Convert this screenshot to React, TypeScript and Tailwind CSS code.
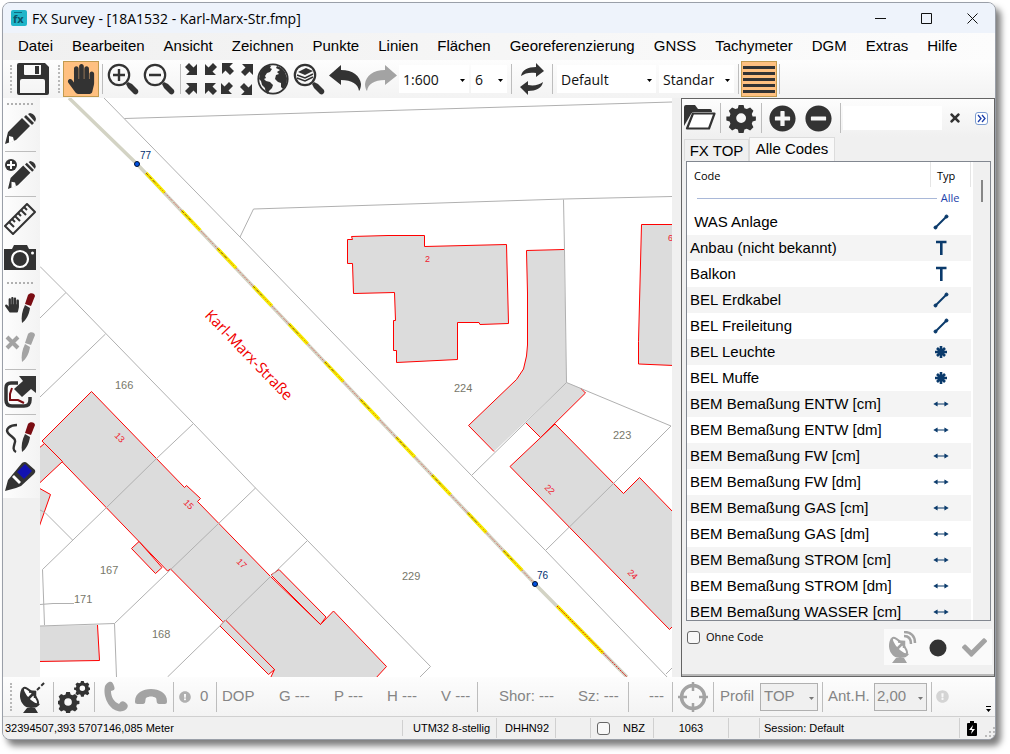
import React from "react";
import { FaCheck, FaExclamationCircle, FaHandPaper, FaMinusCircle, FaPlusCircle, FaTimes } from "react-icons/fa";

const menus = ["Datei", "Bearbeiten", "Ansicht", "Zeichnen", "Punkte", "Linien", "Flächen", "Georeferenzierung", "GNSS", "Tachymeter", "DGM", "Extras", "Hilfe"];

const codes = [
  { name: " WAS Anlage", type: "line" },
  { name: "Anbau (nicht bekannt)", type: "text" },
  { name: "Balkon", type: "text" },
  { name: "BEL Erdkabel", type: "line" },
  { name: "BEL Freileitung", type: "line" },
  { name: "BEL Leuchte", type: "point" },
  { name: "BEL Muffe", type: "point" },
  { name: "BEM Bemaßung ENTW [cm]", type: "dim" },
  { name: "BEM Bemaßung ENTW [dm]", type: "dim" },
  { name: "BEM Bemaßung FW [cm]", type: "dim" },
  { name: "BEM Bemaßung FW [dm]", type: "dim" },
  { name: "BEM Bemaßung GAS [cm]", type: "dim" },
  { name: "BEM Bemaßung GAS [dm]", type: "dim" },
  { name: "BEM Bemaßung STROM [cm]", type: "dim" },
  { name: "BEM Bemaßung STROM [dm]", type: "dim" },
  { name: "BEM Bemaßung WASSER [cm]", type: "dim" },
];

type IconProps = { children: React.ReactNode; className?: string };

// all toolbar icons are drawn on a 32 x 32 grid
const Icon = ({ children, className = "text-[#333]" }: IconProps) => (
  <svg width="32" height="32" viewBox="0 0 32 32" fill="currentColor" className={`shrink-0 ${className}`} aria-hidden="true">
    {children}
  </svg>
);

const ToolButton = ({ label, children, active = false }: { label: string; children: React.ReactNode; active?: boolean }) => (
  <button
    aria-label={label}
    className={`flex h-9 w-9 shrink-0 items-center justify-center ${active ? "border border-[#c29b4f] bg-[#ffc080]" : ""}`}
  >
    {children}
  </button>
);

const Sep = ({ className = "mx-1" }: { className?: string }) => (
  <span className={`h-[30px] w-px shrink-0 bg-[#bdbdbd] ${className}`} />
);

const Grip = () => (
  <span className="mx-[3px] h-7 w-0 shrink-0 border-l-2 border-dotted border-[#b8b8b8]" />
);

const SideSep = () => (
  <span className="flex h-[3px] items-center">
    <span className="h-px w-[31px] bg-[#bdbdbd]" />
  </span>
);

const SideGrip = () => (
  <span className="flex h-2 items-center">
    <span className="w-[26px] border-t-2 border-dotted border-[#b0b0b0]" />
  </span>
);

type PickerProps = { label: string; value: string; className: string; selectClass?: string; arrow?: string };

const Picker = ({ label, value, className, selectClass = "h-7 bg-white pl-1 font-['Open_Sans',sans-serif] text-[14px] text-[#111]", arrow = "text-black" }: PickerProps) => (
  <div className={`relative shrink-0 ${className}`}>
    <select aria-label={label} className={`block w-full appearance-none rounded-none ${selectClass}`}>
      <option>{value}</option>
    </select>
    <svg width="5" height="3" viewBox="0 0 5 3" fill="currentColor" className={`pointer-events-none absolute top-1/2 right-1 ${arrow}`}>
      <path d="M0 0h5L2.5 3z" />
    </svg>
  </div>
);

const SaveIcon = () => (
  <Icon>
    <path fillRule="evenodd" d="M2 0h26l4 4v26a2 2 0 0 1-2 2H2a2 2 0 0 1-2-2V2a2 2 0 0 1 2-2zM7 2v9a1 1 0 0 0 1 1h15a1 1 0 0 0 1-1V2zM5 16a2 2 0 0 0-2 2v12h25V18a2 2 0 0 0-2-2zM18 3h4v8h-4z" />
  </Icon>
);

const Lens = ({ children }: { children: React.ReactNode }) => (
  <Icon>
    <circle cx="12" cy="12" r="10.2" fill="none" stroke="currentColor" strokeWidth="2.2" />
    <path d="M19 21l2-2 4 2 6 6q1 2-.5 3.500T27 31l-6-6z" />
    {children}
  </Icon>
);

const arrowHead = "M3 0l4.500 4.500L11 1v11H0l3.500-3.500L-1 4z";

const FitInIcon = () => (
  <Icon>
    {[0, 90, 180, 270].map((a) => (
      <path key={a} d={arrowHead} transform={`rotate(${a} 16 16) translate(1 0)`} />
    ))}
  </Icon>
);

const FitOutIcon = () => (
  <Icon>
    {[0, 90, 180, 270].map((a) => (
      <path key={a} d={arrowHead} transform={`rotate(${a} 16 16) translate(12 12) rotate(180)`} />
    ))}
  </Icon>
);

const GlobeIcon = () => (
  <Icon>
    <circle cx="16" cy="16" r="14.700" fill="none" stroke="currentColor" strokeWidth="1.800" />
    <path d="M3 10c2-4 5-7 9-8l2 1-1 2 2 1-2 3-3 1-2 3 1 2-2 1 2 2 4 1 3 3-1 3-3 3-1 3c-2-1-3-4-3-6l-3-3-1-4-2-2zM20 3c4 1 6 3 8 6l2 6c0 5-1 8-4 11l-2-2v-4l-3-1-3-3 1-4 3-1-2-2 3-2-4-2z" />
  </Icon>
);

const TurnIcon = ({ flip = false, className }: { flip?: boolean; className?: string }) => (
  <Icon className={className}>
    <path transform={flip ? "translate(32 0) scale(-1 1)" : undefined} d="M0 12.500L12 2v5c12 0 19 6 20 14 0 3-1 6-2 7-1-7-7-11-18-11v5z" />
  </Icon>
);

const RefreshIcon = () => (
  <Icon>
    <path d="M5 13c1-6 7-9 15-9V0l8 8-8 6v-4c-6-1-11 0-15 3zM27 19c-1 6-7 9-15 9v4L4 24l8-6v4c6 1 11 0 15-3z" />
  </Icon>
);

const pencilShape = (
  <g>
    <path d="M1 31l3-12L18 5l8 8-14 14zM20 4l2-2 8 8-2 2zM24 1l2-1q5 1 6 6l-1 3z" />
    <path d="M5 23l4 1 1 4-5 2z" fill="#fff" />
  </g>
);

const pen = (top = "#7a0c12") => (
  <g>
    <path d="M21 13l5 3c-1 7-4 12-8 15-1-6 0-12 3-18z" />
    <path d="M24 3c2-3 7-2 7 1l-4 10-6-2z" fill={top} />
  </g>
);

const gearPath = "M13 0h6l1 4 3 1 4-2 4 4-2 4 1 3 4 0v5l-4 1-1 3 2 4-4 4-4-2-3 1-1 4h-6l-1-4-3-1-4 2-4-4 2-4-1-3-4-1v-5l4 0 1-3-2-4 4-4 4 2 3-1zM16 10a6 6 0 1 0 0 12 6 6 0 0 0 0-12z";

const DishIcon = ({ waves = false, className }: { waves?: boolean; className?: string }) => (
  <Icon className={className}>
    <path d="M5 7C0 16 5 27 14 27c4 0 7-1 9-4l-6-2-8-8zM10 27h8l3 5H6z" />
    <ellipse cx="13.500" cy="15" rx="10.500" ry="3.500" transform="rotate(48 13.500 15)" fill="#fff" stroke="currentColor" strokeWidth="2" />
    <path d="M11 18l7-7M12 10.500l6 .5v6" fill="none" stroke="currentColor" strokeWidth="2.500" />
    {waves ? (
      <path d="M18 5c5 0 7 3 7 8M18 1c7 0 11 4 11 11" fill="none" stroke="currentColor" strokeWidth="2.500" />
    ) : (
      <path d="M20 9L28 1" stroke="currentColor" strokeWidth="2" strokeDasharray="4 2" />
    )}
  </Icon>
);

const TypeIcon = ({ type }: { type: string }) => (
  <svg width="16" height="16" viewBox="0 0 16 16" fill="#0a3a6b" stroke="#0a3a6b" className="mx-auto block" role="img" aria-label={type}>
    {type === "line" && (
      <>
        <path d="M2.500 13.500l11-11" strokeWidth="2" />
        <circle cx="2.500" cy="13.500" r="1.500" />
        <circle cx="13.500" cy="2.500" r="1.500" />
      </>
    )}
    {type === "text" && <path d="M3 2h10.500M8.300 2v13" strokeWidth="2.600" fill="none" />}
    {type === "point" && <path d="M8 2v12M2 8h12M4 4l8 8M12 4l-8 8" strokeWidth="2.600" />}
    {type === "dim" && <path d="M3 8h10M4 6.500L1.500 8 4 9.500zM12 6.500L14.500 8 12 9.500z" strokeWidth="1.200" />}
  </svg>
);

const TopToolbar = () => (
  <div className="flex h-[38px] shrink-0 items-center overflow-hidden bg-gradient-to-b from-[#fdfdfd] to-[#f3f3f3] pl-1">
    <Grip />
    <ToolButton label="Speichern"><SaveIcon /></ToolButton>
    <span className="w-1" />
    <Grip />
    <ToolButton label="Verschieben" active>
      <FaHandPaper size={30} color="#333" />
    </ToolButton>
    <Sep className="ml-[3px] mr-[2px]" />
    <ToolButton label="Vergrößern">
      <Lens><path d="M12 6v12M6 12h12" stroke="currentColor" strokeWidth="2.400" /></Lens>
    </ToolButton>
    <ToolButton label="Verkleinern">
      <Lens><path d="M6 12h12" stroke="currentColor" strokeWidth="2.400" /></Lens>
    </ToolButton>
    <Sep className="ml-[3px] mr-[2px]" />
    <ToolButton label="Einpassen"><FitInIcon /></ToolButton>
    <ToolButton label="Ausdehnen"><FitOutIcon /></ToolButton>
    <ToolButton label="Karte"><GlobeIcon /></ToolButton>
    <ToolButton label="Ebenen">
      <Lens>
        <path d="M5 9l8-4 7 3-8 4z" />
        <path d="M4 12l8 3 8-4M4 15l8 3 8-4" fill="none" stroke="currentColor" strokeWidth="1.600" />
      </Lens>
    </ToolButton>
    <ToolButton label="Zurück"><TurnIcon /></ToolButton>
    <ToolButton label="Vor"><TurnIcon flip className="text-[#a3a3a3]" /></ToolButton>
    <Picker label="Maßstab" value="1:600" className="w-[70px]" />
    <Picker label="Größe" value="6" className="ml-[2px] w-9" />
    <Sep className="ml-1 mr-[2px]" />
    <ToolButton label="Aktualisieren"><RefreshIcon /></ToolButton>
    <Sep className="ml-[2px] mr-1" />
    <Picker label="Ansicht" value="Default" className="w-[99px]" />
    <Picker label="Stil" value="Standar" className="ml-[3px] w-[75px]" />
    <Sep className="ml-1 mr-[2px]" />
    <ToolButton label="Linienliste" active>
      <Icon>
        <path d="M0 3h32v3H0zM0 9h32v3H0zM0 15h32v3H0zM0 21h32v3H0zM0 27h32v3H0z" />
      </Icon>
    </ToolButton>
    <Sep className="ml-[2px]" />
  </div>
);

const SideToolbar = () => (
  <aside className="w-[37px] shrink-0 bg-[#f0f0f0]">
    <div className="flex flex-col items-center gap-[3px] bg-gradient-to-r from-[#fdfdfd] to-[#f3f3f3] pt-[2px] pr-[3px] pb-1">
      <SideGrip />
      <ToolButton label="Zeichnen"><Icon>{pencilShape}</Icon></ToolButton>
      <SideSep />
      <ToolButton label="Punkt zeichnen">
        <Icon>
          <g transform="translate(3 3) scale(.9)">{pencilShape}</g>
          <circle cx="7" cy="7" r="7.500" fill="#f8f8f8" />
          <circle cx="7" cy="7" r="6" />
          <path d="M7 3v8M3 7h8" stroke="#fff" strokeWidth="2" />
        </Icon>
      </ToolButton>
      <SideSep />
      <ToolButton label="Messen">
        <Icon>
          <path d="M1 23L23 1l8 8L9 31z" fill="none" stroke="currentColor" strokeWidth="2" strokeLinejoin="round" />
          <path d="M5 19l5 5M8 16l3 3M11 13l5 5M14 10l3 3M17 7l5 5M20 4l3 3" stroke="currentColor" strokeWidth="2" />
        </Icon>
      </ToolButton>
      <ToolButton label="Foto">
        <Icon>
          <path d="M0 7h8l2-4h13l2 4h7v21H0z" />
          <circle cx="16" cy="17" r="8" fill="none" stroke="#fff" strokeWidth="2.200" />
          <circle cx="28.500" cy="11" r="1.500" fill="#fff" />
        </Icon>
      </ToolButton>
      <SideGrip />
      <ToolButton label="Objekt verschieben">
        <Icon>
          <g transform="translate(1 5) scale(.031)">
            <path d="M408.800 80c-22 0-40 18-40 40v112h-10V60c0-22-15-40-37-40s-37 18-37 40v172h-10V40c0-22-15-40-37-40s-37 18-37 40v192h-10V80c0-22-15-40-37-40s-37 18-37 40v236l-41-56c-13-18-38-22-56-9s-22 38-9 56l128 176c8 11 20 17 33 17h208c19 0 35-13 39-31l29-130c2-8 2-15 2-23V120c0-22-18-40-41-40z" />
          </g>
          {pen()}
        </Icon>
      </ToolButton>
      <ToolButton label="Objekt löschen">
        <Icon className="text-[#a3a3a3]">
          <path d="M3 6l11 11M14 6L3 17" stroke="currentColor" strokeWidth="4" />
          {pen("#a3a3a3")}
        </Icon>
      </ToolButton>
      <SideSep />
      <ToolButton label="Export">
        <Icon>
          <path d="M14 7H7q-5 0-5 5v12q0 6 6 6h12q6 0 6-6v-3" fill="none" stroke="currentColor" strokeWidth="3.500" />
          <path d="M15 0h17v17l-5-4-9 8-8-8 9-8z" />
          <path d="M8 12l-2 6v6l8 0 6 3" fill="none" stroke="#7a0c12" strokeWidth="2" />
        </Icon>
      </ToolButton>
      <SideSep />
      <ToolButton label="Freihand">
        <Icon>
          <path d="M13 4C6 4 1 8 4 12s8 5 7 9-3 8 1 10" fill="none" stroke="currentColor" strokeWidth="2.400" />
          {pen()}
        </Icon>
      </ToolButton>
      <ToolButton label="Marker">
        <Icon>
          <path d="M1 31l3-11 14-17q3-2 5 0l8 7q1 2-1 4L17 26l-5 2z" />
          <path d="M21 4l7 7-8 8-7-7z" fill="#1212b0" />
          <path d="M10 15l7 7-2 2-7-7z" fill="#fff" />
        </Icon>
      </ToolButton>
    </div>
  </aside>
);

const ROAD = "M69 98L137 164L535 584L627 677";

const MapView = () => (
  <main className="min-w-0 flex-1 bg-white">
    <svg className="block h-full w-full" viewBox="40 98 632 579" preserveAspectRatio="xMinYMin slice" fontFamily="Liberation Sans, sans-serif">
      {/* buildings */}
      <g fill="#dcdcdc" stroke="#f00" strokeWidth="1">
        <path d="M351.500 236.500L388 235.500H424.500V246.500L506.500 244.500L508.500 323.500L480 324.500L479 322.500H457.500V359.500L396.500 362.500V350.500H393.500V320.500H395.500L394.500 292.500L353.500 293.500L352.500 263.500H347.500V239.500H352.500z" />
        <path stroke="none" d="M526.500 250.500L564 249.500L566.500 382.500L494 451.500L468.500 425.500L516.500 379.500L523.500 369L526.500 356L527.500 345V293z" />
        <path fill="none" d="M494 451.500L468.500 425.500L516.500 379.500L523.500 369L526.500 356L527.500 345V293L526.500 250.500L564 249.500" />
        <path stroke="none" d="M566.500 382.500L580.500 388L585.500 393L540.500 437.500L526 423z" />
        <path fill="none" d="M580.500 388L585.500 393L540.500 437.500L526 423" />
        <path d="M555 424L623.500 493.500L639.500 477.500L674 513V625L669.500 629.500L510 466.500z" />
        <path d="M674 224.500H641.500L638.500 341.500V364L674 365.500z" />
        <path d="M91.500 391.500L184.500 487.500L186.500 485.500L200.500 498.500L197.500 501.500L270 576L320.500 624.500L333.500 611L386.500 666.500L375 679H270L274.500 669.500L222.500 621.500L170.500 569L167.500 571L42 441z" />
        <path d="M271 575L279 569.500L326 617L320.500 624.500z" />
        <path d="M139 541.500L131.500 548.500L155.500 573.500L162 567.500z" />
        <path d="M225.500 620L220 626L268.500 674.500L274.500 669.500z" />
        <path d="M38 449L44.500 443.500L62.500 461.500L38 484.500z" />
        <path d="M38 487.500L50.500 494.500L38 530z" />
        <path stroke="none" d="M38 626L97.500 625L99.500 660.500L38 662z" />
        <path fill="none" d="M97.500 625L99.500 660.500L38 661.500" />
      </g>

      {/* parcel borders */}
      <path
        fill="none"
        stroke="#b0b0b0"
        d="M104 98L240 237L330 330L471.500 475.500L545.500 550.500L668 678M124.500 118.500L672 102M240 237L253.500 209L564 199L672 196.500M563.500 199.500L564.500 250L566.500 382.500L671 426M566.500 382.500L471.500 475.500M671 426L613.500 483.500L545.500 550.500M672 668L666 674M40 266.500L66 292.500L151 380L193.500 423.500L255.500 488L307.500 540.500L430.500 666.500L420 677M66 292.500L40 318M105.500 334L40 397M193.500 423.500L156.500 458.500L106.500 507.500L42.500 569.500L44.500 625M72.500 540L45 512.500L40 510M255.500 488L114.500 623.500L116.500 677M114.500 623.500L40 626M307.500 540.500L167.500 677M40 604.500L53 603.500H74"
      />

      {/* surveyed line */}
      <g fill="none">
        <path d={ROAD} stroke="#d3d3c4" strokeWidth="3.500" />
        <path d="M146 173L535 584" stroke="#f6f000" strokeWidth="3.500" strokeDasharray="27 25" />
        <path d="M146 173L535 584" stroke="#6b6b20" strokeWidth="1" strokeDasharray="3 2 3 2 3 39" />
        <path d="M146 173L535 584" stroke="#e01010" strokeWidth="1" strokeDasharray="2 1 2 1 2 2" strokeOpacity=".5" />
        <path d="M557 606L603 653" stroke="#f6f000" strokeWidth="3.500" />
        <path d="M557 606L627 677" stroke="#e01010" strokeWidth="1" strokeDasharray="2 1" />
      </g>
      <g fill="#0050e0" stroke="#001030">
        <circle cx="137" cy="164" r="2.500" />
        <circle cx="535" cy="584" r="2.500" />
      </g>

      <g fill="#003070" fontSize="10">
        <text x="140" y="159">77</text>
        <text x="537" y="579">76</text>
      </g>
      <text transform="translate(204 316) rotate(46)" fill="#f00000" fontSize="15" fontFamily="Open Sans, sans-serif">Karl-Marx-Straße</text>
      <g fill="#77776a" fontSize="11">
        <text x="115" y="389">166</text>
        <text x="454" y="392">224</text>
        <text x="613" y="439">223</text>
        <text x="402" y="580">229</text>
        <text x="100" y="574">167</text>
        <text x="74" y="603">171</text>
        <text x="152" y="638">168</text>
      </g>
      <g fill="#f02030" fontSize="9">
        <text x="425" y="262">2</text>
        <text x="668" y="241">6</text>
        <text transform="translate(114 436) rotate(46)">13</text>
        <text transform="translate(183 503) rotate(46)">15</text>
        <text transform="translate(236 562) rotate(46)">17</text>
        <text transform="translate(544 488) rotate(46)">22</text>
        <text transform="translate(627 573) rotate(46)">24</text>
      </g>
    </svg>
  </main>
);

const CodePanel = () => (
  <section className="ml-[9px] flex w-[314px] shrink-0 flex-col border border-[#646464] bg-[#f0f0f0]">
    <div className="flex h-[38px] shrink-0 items-center bg-gradient-to-b from-[#fdfdfd] to-[#f0f0f0]">
      <ToolButton label="Öffnen">
        <Icon>
          <path d="M0 24V5q0-2 2-2h9l3 4h12q2 0 2 3H10q-2 0-3 2z" />
          <path d="M9 11.500h21.500L25 26.500H3z" fill="#fff" stroke="currentColor" strokeWidth="2.200" strokeLinejoin="round" />
        </Icon>
      </ToolButton>
      <Sep className="mx-[2px]" />
      <ToolButton label="Einstellungen">
        <Icon><path transform="translate(3 3) scale(.82)" fillRule="evenodd" d={gearPath} /></Icon>
      </ToolButton>
      <Sep className="mx-[2px]" />
      <ToolButton label="Hinzufügen"><FaPlusCircle size={27} color="#333" /></ToolButton>
      <ToolButton label="Entfernen"><FaMinusCircle size={27} color="#333" /></ToolButton>
      <Sep className="ml-1 mr-[2px]" />
      <input aria-label="Code suchen" className="h-6 w-0 flex-1 bg-white px-1 text-[14px]" />
      <button aria-label="Suche leeren" className="ml-[5px] p-px"><FaTimes size={14} color="#333" /></button>
      <button aria-label="Mehr" className="mr-[6px] ml-3 flex h-[13px] w-[13px] items-center justify-center rounded-[3px] border border-[#7c9cd0] bg-white">
        <svg width="9" height="9" viewBox="0 0 9 9" fill="none" stroke="#1c3faa" strokeWidth="1.300"><path d="M1 1l3 3.500L1 8M5 1l3 3.500L5 8" /></svg>
      </button>
    </div>

    <div className="flex shrink-0 items-end pl-[2px] text-[15px]">
      <button className="h-[22px] w-[65px] border border-b-0 border-[#dcdcdc]">FX TOP</button>
      <button className="h-6 w-[86px] border border-b-0 border-[#dcdcdc] bg-[#f9f9f9]">Alle Codes</button>
    </div>

    <div className="mr-[3px] ml-1 flex min-h-0 flex-1 border border-[#828790] bg-white">
      <div className="min-w-0 flex-1 overflow-hidden">
        <table className="w-full table-fixed border-collapse">
          <thead className="font-['Open_Sans',sans-serif] text-[11px]">
            <tr className="h-[25px]">
              <th className="pt-1 pl-[7px] text-left font-normal">Code</th>
              <th className="w-10 border-x border-[#e5e5e5] pt-1 pl-[6px] text-left font-normal">Typ</th>
            </tr>
          </thead>
          <tbody>
            <tr className="h-[22px] font-['Open_Sans',sans-serif] text-[11px] text-[#1c3faa]">
              <td colSpan={2} className="pr-[11px] pl-[10px]">
                <span className="flex h-[22px] items-center gap-1">
                  <span className="h-px flex-1 bg-[#a9b8d8]" />
                  Alle
                </span>
              </td>
            </tr>
            {codes.map((code, i) => (
              <tr key={code.name} className={`h-[26px] text-[15px] ${i % 2 ? "bg-[#f4f4f4]" : ""}`}>
                <td className="overflow-visible pl-[3px] whitespace-pre">{code.name}</td>
                <td className="pr-5"><div className="w-5"><TypeIcon type={code.type} /></div></td>
              </tr>
            ))}
          </tbody>
        </table>
      </div>
      <div className="ml-[2px] flex w-[17px] shrink-0 justify-center bg-[#f0f0f0] pt-[18px]">
        <span className="h-[22px] w-[2px] bg-[#868686]" />
      </div>
    </div>

    <div className="flex h-[55px] shrink-0 items-start border-b-2 border-[#b8b8b8]">
      <label className="flex items-center gap-[6px] pt-2 pl-[5px] font-['Open_Sans',sans-serif] text-[11px]">
        <input type="checkbox" className="h-[13px] w-[13px] appearance-none rounded-[3px] border border-[#666] bg-[#f8f8f8]" />
        Ohne Code
      </label>
      <div className="mt-2 mr-[2px] ml-auto flex bg-[#fafafa]">
        <ToolButton label="GNSS messen"><DishIcon waves className="text-[#a3a3a3]" /></ToolButton>
        <ToolButton label="Punkt setzen"><Icon><circle cx="16" cy="17" r="8.500" /></Icon></ToolButton>
        <ToolButton label="Übernehmen"><FaCheck size={25} color="#a3a3a3" /></ToolButton>
      </div>
    </div>
  </section>
);

const BottomToolbar = () => (
  <div className="flex h-[39px] shrink-0 items-center overflow-hidden bg-gradient-to-b from-[#fdfdfd] to-[#f3f3f3] pl-1 text-[15px] whitespace-nowrap text-[#858585]">
    <Grip />
    <ToolButton label="GNSS"><DishIcon /></ToolButton>
    <Sep className="mr-[2px] ml-[2px]" />
    <ToolButton label="Konfiguration">
      <Icon>
        <path transform="translate(0 11) scale(.63)" fillRule="evenodd" d={gearPath} />
        <path transform="translate(17 0) scale(.46)" fillRule="evenodd" d={gearPath} />
      </Icon>
    </ToolButton>
    <Sep className="mx-[2px]" />
    <ToolButton label="Verbinden">
      <Icon className="text-[#a3a3a3]">
        <path d="M10 1c3-1 4 1 5 4s1 4-3 5c0 6 3 11 8 13 3-4 5-3 8 0 2 2 0 6-4 7C13 33 3 18 6 5c1-2 2-3 4-4z" />
      </Icon>
    </ToolButton>
    <ToolButton label="Trennen">
      <Icon className="text-[#a3a3a3]">
        <path d="M0 20c0-8 8-12 16-12s16 4 16 12c0 3-1 3-4 3h-4c-3 0-2-4-3-6-3-2-7-2-10 0-1 2 0 6-3 6H4c-3 0-4 0-4-3z" />
      </Icon>
    </ToolButton>
    <Sep className="mr-[5px] ml-1" />
    <FaExclamationCircle size={12} color="#b0b0b0" className="shrink-0" />
    <span className="ml-[9px] w-4">0</span>
    <Sep className="mx-0 mr-[5px]" />
    <span className="w-[57px] shrink-0">DOP</span>
    <span className="w-[55px] shrink-0">G ---</span>
    <span className="w-[53px] shrink-0">P ---</span>
    <span className="w-[54px] shrink-0">H ---</span>
    <span className="w-9 shrink-0">V ---</span>
    <Sep className="mr-[21px] ml-0" />
    <span className="w-[79px] shrink-0">Shor: ---</span>
    <span className="w-[50px] shrink-0">Sz: ---</span>
    <Sep className="mr-5 ml-0" />
    <span className="w-[23px] shrink-0">---</span>
    <Sep className="mx-0 mr-[2px]" />
    <ToolButton label="Zentrieren">
      <Icon className="text-[#a3a3a3]">
        <circle cx="16" cy="16" r="11.500" fill="none" stroke="currentColor" strokeWidth="3.500" />
        <path d="M16 1v9M16 22v9M1 16h9M22 16h9" stroke="currentColor" strokeWidth="2.500" />
      </Icon>
    </ToolButton>
    <Sep className="mr-[6px] ml-[2px]" />
    <span className="w-10 shrink-0">Profil</span>
    <Picker label="Profil" value="TOP" className="w-[58px]" arrow="text-[#777]" selectClass="h-7 border border-[#b0b0b0] bg-[#f0f0f0] pl-[3px] text-[15px]" />
    <Sep className="mr-[5px] ml-1" />
    <span className="w-[46px] shrink-0">Ant.H.</span>
    <Picker label="Antennenhöhe" value="2,00" className="w-[53px]" arrow="text-[#777]" selectClass="h-7 border border-[#b0b0b0] bg-[#f0f0f0] pl-[2px] text-[15px]" />
    <Sep className="mr-1 ml-1" />
    <FaExclamationCircle size={13} color="#d4d4d4" className="shrink-0" />
    <button aria-label="Weitere" className="mt-auto mr-[2px] mb-1 ml-auto">
      <svg width="8" height="6" viewBox="0 0 8 6"><path d="M1 0h5v1H1zM1 3h5L3.500 6z" /></svg>
    </button>
  </div>
);

const StatusBar = () => (
  <footer className="flex h-[23px] shrink-0 items-center divide-x divide-[#d0d0d0] border-t border-[#d0d0d0] bg-[#f0f0f0] text-[11px] whitespace-nowrap text-black">
    <span className="flex-1 pl-[2px]">32394507,393 5707146,085 Meter</span>
    <span className="w-[94px] py-[2px] pl-[10px]">UTM32 8-stellig</span>
    <span className="w-[59px] py-[2px] pl-2">DHHN92</span>
    <span className="h-5 w-[35px]" />
    <label className="flex w-[63px] items-center gap-[13px] py-[2px] pl-[6px]">
      <input type="checkbox" className="h-[13px] w-[13px] appearance-none rounded-[3px] border border-[#666] bg-[#f8f8f8]" />
      NBZ
    </label>
    <span className="w-[75px] py-[2px] text-center">1063</span>
    <span className="h-5 w-[31px]" />
    <span className="w-[200px] py-[2px] pl-1">Session: Default</span>
    <span className="flex w-[35px] items-center justify-between pl-[7px]">
      <svg width="10" height="15" viewBox="0 0 10 15">
        <path d="M3 0h4v2h2q1 0 1 1v11q0 1-1 1H1q-1 0-1-1V3q0-1 1-1h2z" />
        <path d="M6 4L2 9h3l-1 4 4-5H5z" fill="#fff" />
      </svg>
      <svg width="10" height="10" viewBox="0 0 10 10" fill="#bbb" className="mt-2">
        <path d="M8 0h2v2H8zM4 4h2v2H4zM8 4h2v2H8zM0 8h2v2H0zM4 8h2v2H4zM8 8h2v2H8z" />
      </svg>
    </span>
  </footer>
);

export default function App() {
  return (
    <div className="h-screen overflow-hidden bg-white pt-[2px] pr-[14px] pb-[14px] pl-[2px] font-['Liberation_Sans',sans-serif] text-black">
      <div className="flex h-full flex-col overflow-hidden rounded-lg border border-[#9a9fa8] bg-[#f0f0f0] shadow-[5px_6px_6px_rgba(0,0,0,0.5)]">
        <header className="flex h-[30px] shrink-0 items-center bg-[#eef3fb] pl-2 font-['Open_Sans',sans-serif] text-[14px]">
          <svg width="16" height="16" viewBox="0 0 16 16" className="shrink-0">
            <rect width="16" height="16" rx="2" fill="#1fb5c9" />
            <path d="M3 2.500h8" stroke="#0c6a80" />
            <text x="2" y="13" fontSize="11" fontWeight="bold" fontFamily="Open Sans, sans-serif" fill="#0c5266">fx</text>
          </svg>
          <h1 className="ml-[5px]">FX Survey - [18A1532 - Karl-Marx-Str.fmp]</h1>
          <div className="ml-auto flex">
            {["M0 5.500h11", "M.5.5h10v10H.5z", "M.5.5l10 10M10.500.5l-10 10"].map((d, i) => (
              <button key={d} aria-label={["Minimieren", "Maximieren", "Schließen"][i]} className="flex h-[30px] w-[46px] items-center justify-center">
                <svg width="11" height="11" viewBox="0 0 11 11" fill="none" stroke="#111"><path d={d} /></svg>
              </button>
            ))}
          </div>
        </header>
        <nav className="flex h-[27px] shrink-0 items-center gap-[19px] bg-gradient-to-r from-[#f0f0f0] to-[#fcfcfc] pl-[15px] text-[15px]">
          {menus.map((m) => (
            <button key={m}>{m}</button>
          ))}
        </nav>
        <TopToolbar />
        <div className="flex min-h-0 flex-1">
          <SideToolbar />
          <MapView />
          <CodePanel />
        </div>
        <BottomToolbar />
        <StatusBar />
      </div>
    </div>
  );
}
